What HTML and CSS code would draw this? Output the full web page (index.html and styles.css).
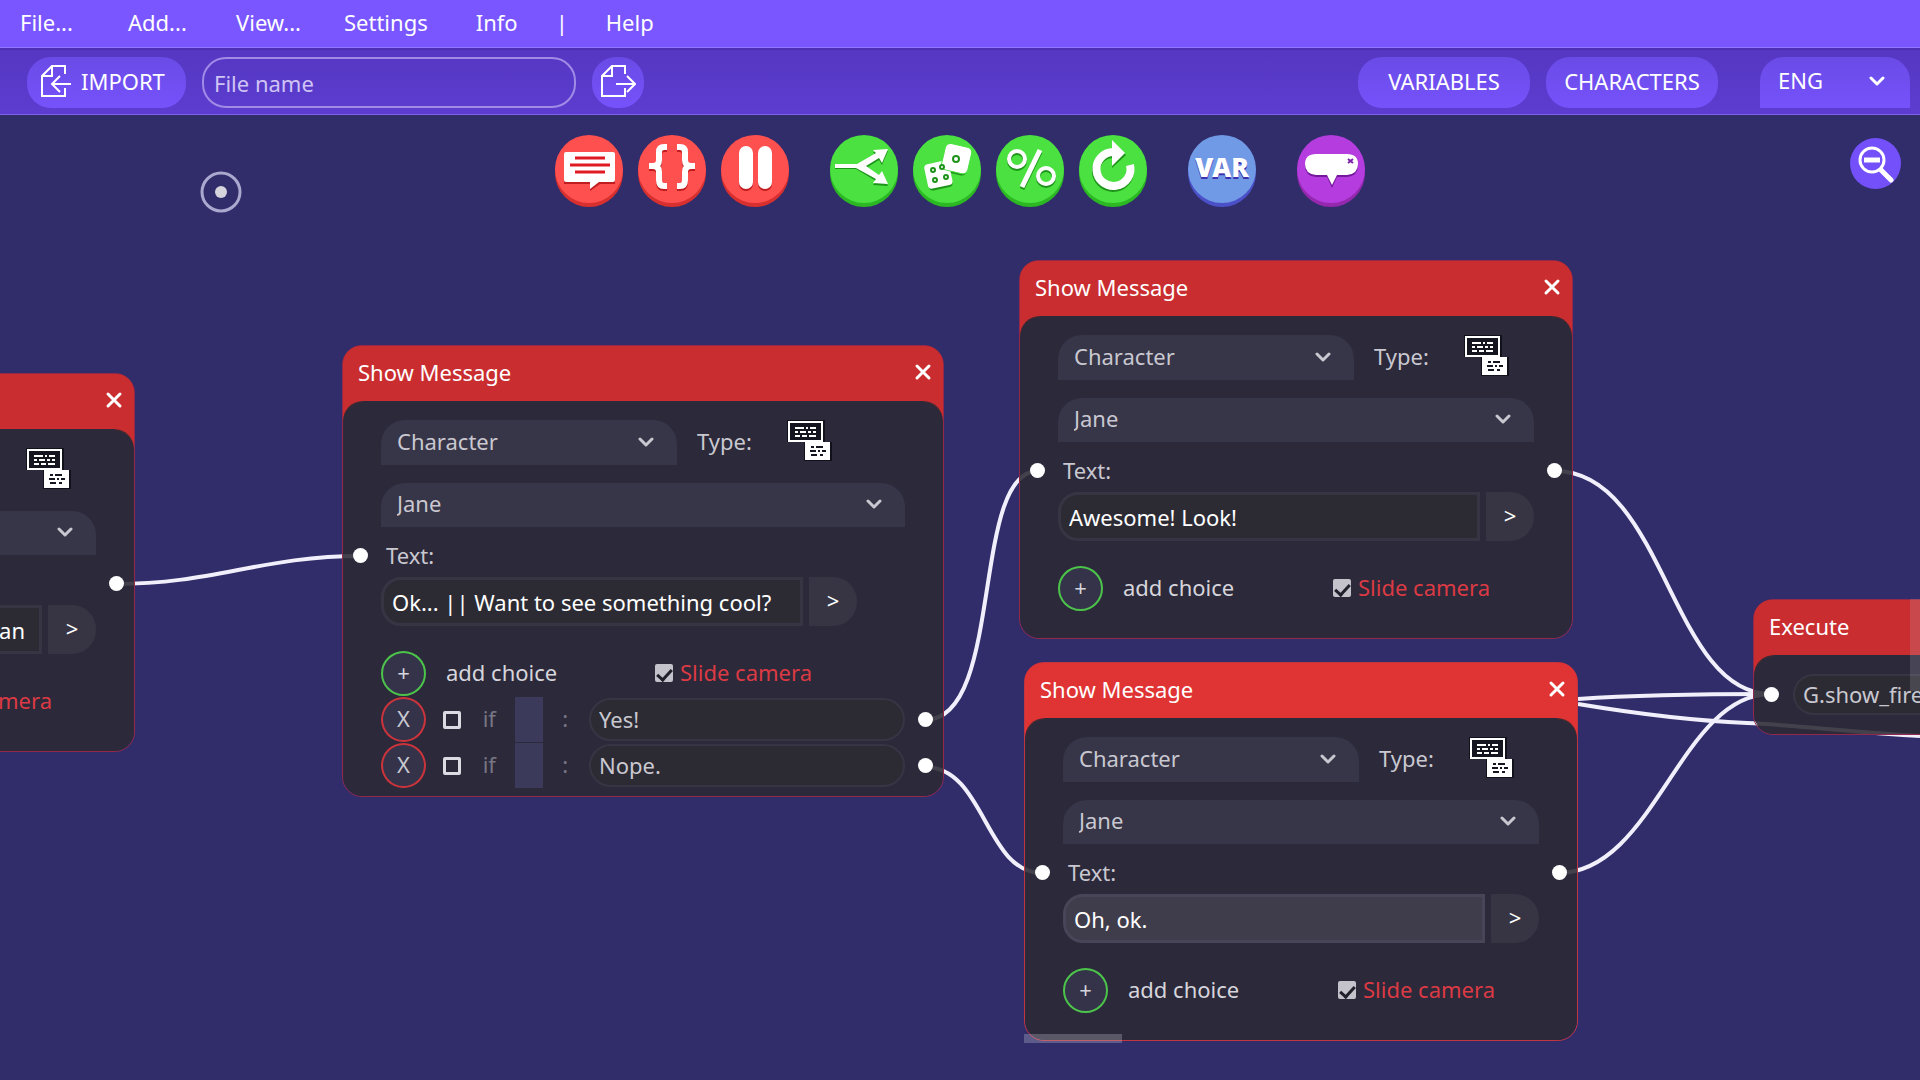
FILE: index.html
```html
<!DOCTYPE html>
<html lang="en">
<head>
<meta charset="utf-8">
<title>Dialogue editor</title>
<link rel="stylesheet" href="styles.css">
</head>
<body>
<svg class="sprite" aria-hidden="true">
  <symbol id="chevron" viewBox="0 0 16 12"><path d="M2 3l6 6 6-6" fill="none" stroke="currentColor" stroke-width="3" stroke-linecap="round" stroke-linejoin="round"/></symbol>
  <symbol id="close" viewBox="0 0 18 18"><path d="M3 3l12 12M15 3L3 15" fill="none" stroke="currentColor" stroke-width="3" stroke-linecap="round"/></symbol>
  <symbol id="bubbles" viewBox="0 0 46 42">
    <path d="M1 1h38v22h7v19H18V23H1z" fill="#11111c"/>
    <path d="M3 3h33v19H3z" fill="#15151f" stroke="#fff" stroke-width="2"/>
    <path d="M9 9h9M20 9h2M24 9h6M9 13h3M14 13h6M22 13h3M27 13h3M9 17h5M16 17h5M23 17h7" stroke="#fff" stroke-width="2"/>
    <path d="M19 23h25v18H19z" fill="#fff"/>
    <path d="M25 28h3M30 28h7M24 32h6M32 32h2M36 32h4M25 36h6M34 36h3" stroke="#15151f" stroke-width="2"/>
  </symbol>
</svg>

<nav class="menubar" aria-label="Main menu">
  <button class="menu wide">File...</button>
  <button class="menu wide">Add...</button>
  <button class="menu wide">View...</button>
  <button class="menu">Settings</button>
  <div class="menu-tail">
    <button class="menu">Info</button>
    <span>|</span>
    <button class="menu">Help</button>
  </div>
</nav>

<header class="toolbar">
  <button class="pill import">
    <svg width="32" height="34" viewBox="0 0 32 34" fill="none" stroke="#fff" stroke-width="2"><path d="M25 10V2H12L2 12v20h23v-8M12 2v10H2M31 20H13M20 12l-8 8 8 8"/></svg>
    <span>IMPORT</span>
  </button>
  <input class="filename" type="text" placeholder="File name" aria-label="File name">
  <button class="pill export" aria-label="Export">
    <svg width="36" height="34" viewBox="0 0 36 34" fill="none" stroke="#fff" stroke-width="2"><path d="M25 10V2H12L2 12v20h23v-8M12 2v10H2M16 20h18M27 12l8 8-8 8"/></svg>
  </button>
  <div class="tools-right">
    <button class="pill big">VARIABLES</button>
    <button class="pill big">CHARACTERS</button>
    <div class="drop lang">
      <select aria-label="Language"><option>ENG</option></select>
      <svg><use href="#chevron"/></svg>
    </div>
  </div>
</header>

<main class="canvas">
  <svg class="wires" width="1920" height="965" viewBox="0 115 1920 965" aria-hidden="true">
    <path d="M115 584C215 584 261 556 361 556M925 720C1005 720 970 471 1038 471M925 767C985 767 985 873 1042 873M1555 471C1665 471 1670 694 1771 694M1558 873C1655 873 1680 694 1771 694"/>
    <path d="M1578 699Q1650 694 1771 694M1578 704C1650 716 1700 721 1747 723S1860 733 1920 736"/>
  </svg>

  <div class="palette">
    <div class="group red">
      <button aria-label="Message"><svg viewBox="0 0 68 72">
        <circle class="base" cx="34" cy="38" r="34"/><circle class="face" cx="34" cy="34" r="34"/>
        <path class="under" d="M9 19h51v30H45l-10 7v-7H9z"/>
        <path class="ink" d="M11 17h47q2 0 2 2v26q0 2-2 2H44l-9 7v-7H11q-2 0-2-2V19q0-2 2-2z"/>
        <path d="M20 23h30M15 30h40M20 37h30" stroke="#e01a22" stroke-width="3"/></svg></button>
      <button aria-label="Execute code"><svg viewBox="0 0 68 72">
        <circle class="base" cx="34" cy="38" r="34"/><circle class="face" cx="34" cy="34" r="34"/>
        <g fill="none" stroke-width="6"><path class="uline" d="M29 14h-3q-5 0-5 5v8q0 6-6 6h-4h4q6 0 6 6v8q0 6 5 6h3M39 14h3q5 0 5 5v8q0 6 6 6h4h-4q-6 0-6 6v8q0 6-5 6h-3"/>
        <path class="iline" d="M29 12h-3q-5 0-5 5v8q0 6-6 6h-4h4q6 0 6 6v8q0 6 5 6h3M39 12h3q5 0 5 5v8q0 6 6 6h4h-4q-6 0-6 6v8q0 6-5 6h-3"/></g></svg></button>
      <button aria-label="Pause"><svg viewBox="0 0 68 72">
        <circle class="base" cx="34" cy="38" r="34"/><circle class="face" cx="34" cy="34" r="34"/>
        <g class="under"><rect x="18" y="13" width="14" height="43" rx="7"/><rect x="37" y="13" width="14" height="43" rx="7"/></g>
        <g class="ink"><rect x="18" y="11" width="14" height="43" rx="7"/><rect x="37" y="11" width="14" height="43" rx="7"/></g></svg></button>
    </div>
    <div class="group green">
      <button aria-label="Branch"><svg viewBox="0 0 68 72">
        <circle class="base" cx="34" cy="38" r="34"/><circle class="face" cx="34" cy="34" r="34"/>
        <path class="under" d="M5 32h22l19-11-3-4 15-1-6 14-3-5-13 8 13 9 3-4 6 13-15-1 3-4-20-12H5z"/>
        <path class="ink" d="M5 29h22l19-11-3-3 15-1-6 14-3-5-13 8 13 9 3-4 6 13-15-1 3-4-20-11H5z"/></svg></button>
      <button aria-label="Random"><svg viewBox="0 0 68 72">
        <circle class="base" cx="34" cy="38" r="34"/><circle class="face" cx="34" cy="34" r="34"/>
        <g class="under"><rect x="14" y="29" width="24" height="25" rx="4" transform="rotate(-12 26 42)"/><rect x="30" y="13" width="26" height="26" rx="5" transform="rotate(13 43 26)"/></g>
        <g class="ink"><rect x="13" y="27" width="25" height="25" rx="4" transform="rotate(-12 26 40)"/><rect x="30" y="10" width="27" height="27" rx="5" transform="rotate(13 43 24)" stroke="#49e03f"/></g>
        <g class="pips"><circle cx="43" cy="24" r="3"/><circle cx="20" cy="35" r="2"/><circle cx="29" cy="32" r="2"/><circle cx="22" cy="45" r="2"/><circle cx="33" cy="42" r="2"/></g></svg></button>
      <button aria-label="Chance"><svg viewBox="0 0 68 72">
        <circle class="base" cx="34" cy="38" r="34"/><circle class="face" cx="34" cy="34" r="34"/>
        <g fill="none" stroke-width="4"><g class="uline"><circle cx="21" cy="26" r="8"/><circle cx="50" cy="43" r="8"/><path stroke-width="5" d="M44 17L26 54"/></g>
        <g class="iline"><circle cx="21" cy="24" r="8"/><circle cx="50" cy="41" r="8"/><path stroke-width="5" d="M44 15L26 52"/></g></g></svg></button>
      <button aria-label="Repeat"><svg viewBox="0 0 68 72">
        <circle class="base" cx="34" cy="38" r="34"/><circle class="face" cx="34" cy="34" r="34"/>
        <path class="uline" d="M35 19A17 17 0 1 0 51 36" fill="none" stroke-width="8"/><path class="under" d="M33 8l14 12-14 13z"/>
        <path class="iline" d="M35 17A17 17 0 1 0 51 30" fill="none" stroke-width="8"/><path class="ink" d="M33 5l13 13-13 13z"/></svg></button>
    </div>
    <div class="group blue">
      <button aria-label="Variable"><svg viewBox="0 0 68 72">
        <circle class="base" cx="34" cy="38" r="34"/><circle class="face" cx="34" cy="34" r="34"/>
        <text class="var under" x="34" y="44">VAR</text><text class="var ink" x="34" y="42">VAR</text></svg></button>
    </div>
    <div class="group purple">
      <button aria-label="Bubble"><svg viewBox="0 0 68 72">
        <circle class="base" cx="34" cy="38" r="34"/><circle class="face" cx="34" cy="34" r="34"/>
        <path class="under" d="M19 21h31q11 0 11 10t-11 11H40l-5 11-5-11H19Q8 41 8 31t11-10z"/>
        <path class="ink" d="M19 19h31q11 0 11 10t-11 11H40l-5 10-5-10H19Q8 39 8 29t11-10z"/>
        <path d="M51 24l5 4M56 24l-5 4" stroke="#7d22a8" stroke-width="2"/></svg></button>
    </div>
  </div>

  <svg class="target" width="42" height="42" viewBox="0 0 42 42" aria-hidden="true"><circle cx="21" cy="21" r="19" fill="none" stroke="#aaa8ce" stroke-width="3"/><circle cx="21" cy="21" r="6" fill="#d6d5de"/></svg>

  <button class="zoom" aria-label="Zoom out">
    <svg width="36" height="38" viewBox="0 0 36 38" fill="none" stroke="#fff"><circle cx="14" cy="15" r="12" stroke-width="3"/><path d="M6 15h16" stroke-width="5"/><path d="M23 25l10 10" stroke-width="5" stroke-linecap="round"/></svg>
  </button>

  <section class="node node-a">
    <header><h2>Show Message</h2><button aria-label="Close"><svg><use href="#close"/></svg></button></header>
    <div class="body">
      <div class="row">
        <div class="drop kind"><select aria-label="Speaker type"><option>Character</option></select><svg><use href="#chevron"/></svg></div>
        <span>Type:</span>
        <button class="type" aria-label="Message type"><svg><use href="#bubbles"/></svg></button>
      </div>
      <div class="drop who"><select aria-label="Speaker"><option>Jane</option></select><svg><use href="#chevron"/></svg></div>
      <div class="caption"><label for="text-a">Text:</label><i class="port in"></i><i class="port out"></i></div>
      <div class="entry"><input id="text-a" class="tail" type="text" value="an"><button aria-label="Expand text">&gt;</button></div>
      <div class="row add"><button class="round" id="add-a">+</button><label for="add-a">add choice</label>
        <label class="slide"><input type="checkbox" checked>Slide camera</label></div>
    </div>
  </section>

  <section class="node node-b">
    <header><h2>Show Message</h2><button aria-label="Close"><svg><use href="#close"/></svg></button></header>
    <div class="body">
      <div class="row">
        <div class="drop kind"><select aria-label="Speaker type"><option>Character</option></select><svg><use href="#chevron"/></svg></div>
        <span>Type:</span>
        <button class="type" aria-label="Message type"><svg><use href="#bubbles"/></svg></button>
      </div>
      <div class="drop who"><select aria-label="Speaker"><option>Jane</option></select><svg><use href="#chevron"/></svg></div>
      <div class="caption"><label for="text-b">Text:</label><i class="port in"></i></div>
      <div class="entry"><input id="text-b" type="text" value="Ok... || Want to see something cool?"><button aria-label="Expand text">&gt;</button></div>
      <div class="row add"><button class="round" id="add-b">+</button><label for="add-b">add choice</label>
        <label class="slide"><input type="checkbox" checked>Slide camera</label></div>
      <div class="row choice"><button class="round remove" aria-label="Remove choice">X</button><input type="checkbox" id="if-1"><label for="if-1">if</label><span class="cond"></span><span class="colon">:</span><input class="answer" type="text" value="Yes!" aria-label="Choice 1"><i class="port out"></i></div>
      <div class="row choice"><button class="round remove" aria-label="Remove choice">X</button><input type="checkbox" id="if-2"><label for="if-2">if</label><span class="cond"></span><span class="colon">:</span><input class="answer" type="text" value="Nope." aria-label="Choice 2"><i class="port out"></i></div>
    </div>
  </section>

  <section class="node node-c">
    <header><h2>Show Message</h2><button aria-label="Close"><svg><use href="#close"/></svg></button></header>
    <div class="body">
      <div class="row">
        <div class="drop kind"><select aria-label="Speaker type"><option>Character</option></select><svg><use href="#chevron"/></svg></div>
        <span>Type:</span>
        <button class="type" aria-label="Message type"><svg><use href="#bubbles"/></svg></button>
      </div>
      <div class="drop who"><select aria-label="Speaker"><option>Jane</option></select><svg><use href="#chevron"/></svg></div>
      <div class="caption"><label for="text-c">Text:</label><i class="port in"></i><i class="port out"></i></div>
      <div class="entry"><input id="text-c" type="text" value="Awesome! Look!"><button aria-label="Expand text">&gt;</button></div>
      <div class="row add"><button class="round" id="add-c">+</button><label for="add-c">add choice</label>
        <label class="slide"><input type="checkbox" checked>Slide camera</label></div>
    </div>
  </section>

  <section class="node node-d active">
    <header><h2>Show Message</h2><button aria-label="Close"><svg><use href="#close"/></svg></button></header>
    <div class="body">
      <div class="row">
        <div class="drop kind"><select aria-label="Speaker type"><option>Character</option></select><svg><use href="#chevron"/></svg></div>
        <span>Type:</span>
        <button class="type" aria-label="Message type"><svg><use href="#bubbles"/></svg></button>
      </div>
      <div class="drop who"><select aria-label="Speaker"><option>Jane</option></select><svg><use href="#chevron"/></svg></div>
      <div class="caption"><label for="text-d">Text:</label><i class="port in"></i><i class="port out"></i></div>
      <div class="entry"><input id="text-d" class="focused" type="text" value="Oh, ok."><button aria-label="Expand text">&gt;</button></div>
      <div class="row add"><button class="round" id="add-d">+</button><label for="add-d">add choice</label>
        <label class="slide"><input type="checkbox" checked>Slide camera</label></div>
    </div>
  </section>

  <section class="node node-e">
    <header><h2>Execute</h2></header>
    <div class="body">
      <div class="code"><input class="answer" type="text" value="G.show_fire" aria-label="Code"><i class="port in"></i></div>
    </div>
  </section>

  <div class="scroll vertical"></div>
  <div class="scroll horizontal"></div>
</main>
</body>
</html>
```

FILE: styles.css
```css
* { box-sizing: border-box; }

body {
  margin: 0;
  min-height: 100vh;
  display: flex;
  flex-direction: column;
  overflow: hidden;
  background: #302d6a;
  color: #c9c8d0;
  font: 22px/30px "Noto Sans", "Open Sans", sans-serif;
}

button, input, select {
  font: inherit;
  color: inherit;
  margin: 0;
  padding: 0;
  border: 0;
  background: none;
}

button { cursor: pointer; }
.sprite { position: absolute; width: 0; height: 0; }

/* Menu and toolbar */
.menubar {
  display: flex;
  align-items: center;
  height: 48px;
  padding: 0 20px 4px;
  background: #7956ff;
  border-bottom: 1px solid #9277ff;
  color: #fff;
}

.menu { text-align: left; }
.menu.wide { width: 108px; }
.menu-tail { display: flex; gap: 38px; margin-left: 48px; }

.toolbar {
  display: flex;
  align-items: center;
  height: 67px;
  padding: 0 10px 0 27px;
  background: linear-gradient(#5537c2, #5c3dd0);
  border-bottom: 1px solid #7d62e8;
  border-top: 2px solid #4d30b4;
  color: #fff;
}

.pill {
  display: flex;
  align-items: center;
  justify-content: center;
  height: 51px;
  padding-bottom: 3px;
  border-radius: 24px;
  background: linear-gradient(#6a4be6, #7652fb);
}

.import { width: 159px; padding-left: 13px; justify-content: flex-start; gap: 9px; }

.filename {
  width: 374px;
  height: 51px;
  margin: 0 16px;
  padding: 2px 10px 0;
  border: 2px solid #a08ce6;
  border-radius: 24px;
}

.filename::placeholder { color: #cfc4f4; opacity: 1; }
.export { width: 52px; }
.tools-right { display: flex; gap: 16px; margin-left: auto; }
.big { width: 172px; }

.drop { position: relative; }

.drop select {
  appearance: none;
  width: 100%;
  height: 100%;
  padding: 0 0 4px 16px;
  border-radius: 24px 24px 0 0;
  background: #373548;
}

.drop svg {
  position: absolute;
  right: 23px;
  top: 50%;
  width: 16px;
  height: 12px;
  margin-top: -7px;
  color: #c9c8d0;
  pointer-events: none;
}

.lang { width: 150px; height: 51px; margin-left: 26px; }
.lang select { padding-left: 18px; background: linear-gradient(#6a4be6, #7652fb); }
.lang svg { right: 25px; color: #fff; }

/* Canvas */
.canvas { position: relative; flex: 1; overflow: hidden; }
.wires { position: absolute; left: 0; top: 0; fill: none; stroke: #f0effb; stroke-width: 4; }

.palette {
  position: relative;
  display: flex;
  justify-content: center;
  gap: 41px;
  padding-top: 20px;
}

.group { display: flex; gap: 15px; }
.group button, .group svg { display: block; width: 68px; height: 72px; }
.ink { fill: #fff; }
.iline { stroke: #fff; }
.under { fill: var(--deep); }
.uline { stroke: var(--deep); }
.face { fill: var(--face); }
.base { fill: var(--base); }
.pips { fill: #fff; stroke: var(--deep); stroke-width: 2; }
.red { --face: #ff5050; --base: #d8302f; --deep: #c01d20; }
.green { --face: #4be141; --base: #2bb823; --deep: #1d9419; }
.blue { --face: #709ae6; --base: #4c50c8; --deep: #3c2fb0; }
.purple { --face: #b53ddf; --base: #9428ae; --deep: #74189c; }
.var { font: 900 26px "Noto Sans", sans-serif; text-anchor: middle; }

.target { position: absolute; left: 200px; top: 56px; }

.zoom {
  position: absolute;
  right: 19px;
  top: 23px;
  display: grid;
  place-items: center;
  width: 51px;
  height: 51px;
  border-radius: 50%;
  background: #7450fa;
}

/* Nodes */
.node {
  position: absolute;
  width: 554px;
  border: 1px solid #93284a;
  border-radius: 20px;
  background: radial-gradient(circle at 20px 76px, transparent 19px, #c92d2f 20px) 0 0 / 20px 76px no-repeat,
    radial-gradient(circle at 0 76px, transparent 19px, #c92d2f 20px) 100% 0 / 20px 76px no-repeat;
}

.node-a { left: -419px; top: 258px; }
.node-b { left: 342px; top: 230px; width: 602px; }
.node-c { left: 1019px; top: 145px; }
.node-d { left: 1024px; top: 547px; }
.node-e { left: 1753px; top: 484px; }

.node header {
  display: flex;
  align-items: center;
  justify-content: space-between;
  height: 55px;
  padding: 0 11px 4px 15px;
  border-radius: 18px 18px 0 0;
  background: #c92d2f;
  color: #fff;
}

.node h2 { margin: 0; font: inherit; }
.node header button, .node header svg { display: block; width: 18px; height: 18px; }

.body {
  padding: 19px 38px 27px;
  border-radius: 20px;
  background: rgba(42, 41, 51, 0.88);
}

.active { border-color: #c23440; background-image: radial-gradient(circle at 20px 76px, transparent 19px, #e03333 20px), radial-gradient(circle at 0 76px, transparent 19px, #e03333 20px); }
.active header { background: #e03333; }
.node-b .body { padding-bottom: 8px; }
.node-e .body { padding-bottom: 19px; }

.row { display: flex; align-items: center; height: 45px; }
.row span, .row label { padding-bottom: 4px; }
.kind { width: 296px; height: 45px; margin-right: 20px; }
.type { margin-left: 34px; padding-bottom: 5px; }
.type svg { display: block; width: 46px; height: 42px; }
.who { height: 44px; margin-top: 18px; }

.caption { position: relative; height: 50px; padding: 13px 5px 0; }

.port {
  position: absolute;
  top: 50%;
  width: 15px;
  height: 15px;
  margin-top: -8px;
  border-radius: 50%;
  background: #fff;
}

.port.in { left: -28px; }
.port.out { right: -28px; }
.caption .port { margin-top: -4px; }

.entry { display: flex; gap: 6px; height: 49px; color: #fff; }

.entry input {
  width: 422px;
  padding: 0 8px;
  border: 3px solid #373544;
  border-radius: 20px 0 0 20px;
  background: #2c2b34;
}

.entry .tail { padding-right: 14px; text-align: right; }
.entry .focused { background: #3f3d4c; border-color: #474557; }
.entry button { width: 48px; padding-bottom: 3px; border-radius: 0 24px 24px 0; background: #373544; }

.add { margin-top: 25px; color: #d6d5dc; }

.round {
  width: 45px;
  height: 45px;
  padding-bottom: 3px;
  border: 2px solid #4cc44a;
  border-radius: 50%;
  background: #34334a;
  margin-right: 20px;
}

.remove { border-color: #cc343c; margin-right: 17px; }
.row .slide { display: flex; align-items: center; gap: 7px; margin-left: auto; margin-right: 44px; padding-bottom: 3px; color: #dc3a44; }
.node-b .slide { margin-right: 93px; }

input[type="checkbox"] {
  appearance: none;
  width: 18px;
  height: 18px;
  border: 3px solid #dcdbe4;
  border-radius: 2px;
}

input[type="checkbox"]:checked {
  border: 0;
  margin-top: 2px;
  background: #c4c3cb;
  display: grid;
  place-items: center;
}

input[type="checkbox"]:checked::after {
  content: "";
  width: 6px;
  height: 12px;
  border: solid #20202c;
  border-width: 0 3px 3px 0;
  transform: rotate(42deg);
}

.choice { position: relative; margin-top: 1px; color: #777684; }
.choice .remove, .answer { color: #c9c8d0; }
.choice label { width: 33px; margin-left: 22px; }
.cond { width: 28px; height: 45px; background: #3b3a5a; }
.colon { width: 46px; padding-left: 19px; }

.answer {
  width: 316px;
  height: 43px;
  padding: 0 8px 2px;
  border: 2px solid #373544;
  border-radius: 22px;
  background: #2c2b34;
}

.code { position: relative; padding-left: 1px; }
.code .answer { width: 420px; height: 41px; display: block; }

.scroll { position: absolute; background: rgba(200, 200, 210, 0.18); }
.vertical { right: 0; top: 484px; width: 10px; height: 92px; }
.horizontal { left: 1024px; top: 919px; width: 98px; height: 9px; background: rgba(200, 200, 210, 0.3); }
```
